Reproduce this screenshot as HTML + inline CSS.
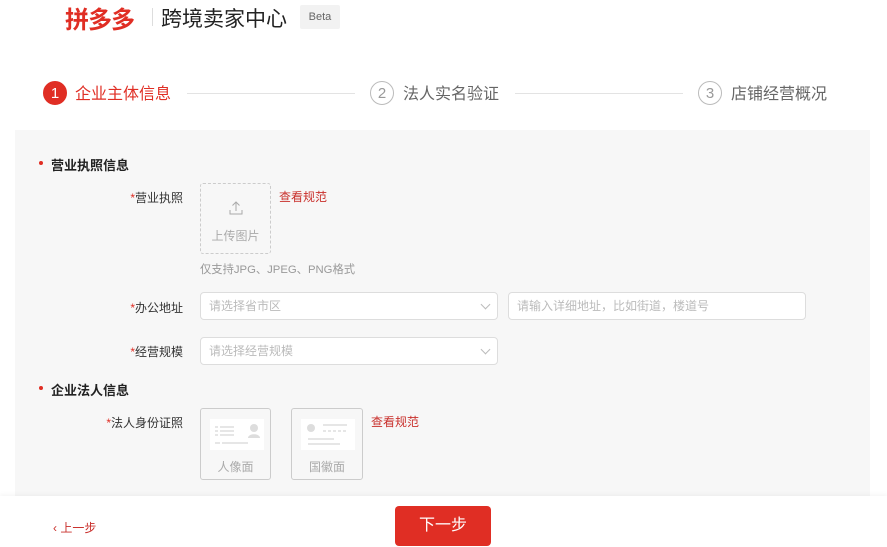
<!DOCTYPE html>
<html><head><meta charset="utf-8"><style>
*{margin:0;padding:0;box-sizing:border-box}
body{width:887px;height:547px;overflow:hidden;background:#fff;font-family:"Liberation Sans","Noto Sans CJK SC",sans-serif;position:relative;color:#333}
.a{position:absolute;white-space:nowrap}
.panel{position:absolute;left:15px;top:130px;width:855px;height:366px;background:#f7f7f7}
.circ{position:absolute;width:24px;height:24px;border-radius:50%;border:1px solid #bbb;color:#999;font-size:15px;display:flex;align-items:center;justify-content:center}
.line{position:absolute;height:1px;background:#e3e3e3;top:93px}
.stxt{font-size:16px;color:#666;top:84px;line-height:22px}
.sec{font-size:13px;font-weight:bold;color:#222}
.dot{width:4px;height:4px;border-radius:50%;background:#e02e24}
.lbl{font-size:12px;color:#333;text-align:right;width:160px}
.lbl b{color:#e02e24;font-weight:normal}
.red{color:#c9302c;font-size:12px}
.inp{position:absolute;height:28px;background:#fff;border:1px solid #ddd;border-radius:4px;font-size:12px;color:#bbb;padding-left:8px;line-height:26px}
.chev{position:absolute;right:8px;top:8px;width:7px;height:7px;border-right:1px solid #bbb;border-bottom:1px solid #bbb;transform:rotate(45deg)}
.box{position:absolute;border:1px solid #ccc;border-radius:3px;background:#f7f7f7;font-size:12px;color:#aaa;text-align:center}
</style></head><body>
<div class="a" style="left:65px;top:0px;font-size:24px;font-weight:bold;color:#e02e24;letter-spacing:-1px">拼多多</div>
<div class="a" style="left:152px;top:8px;width:1px;height:18px;background:#ddd"></div>
<div class="a" style="left:161px;top:3px;font-size:21px;color:#222">跨境卖家中心</div>
<div class="a" style="left:300px;top:5px;width:40px;height:24px;background:#f2f2f2;border-radius:2px;font-size:11px;color:#666;text-align:center;line-height:24px">Beta</div>

<div class="circ" style="left:43px;top:81px;background:#e02e24;border-color:#e02e24;color:#fff">1</div>
<div class="a stxt" style="left:75px;color:#e02e24">企业主体信息</div>
<div class="line" style="left:187px;width:168px"></div>
<div class="circ" style="left:370px;top:81px">2</div>
<div class="a stxt" style="left:403px">法人实名验证</div>
<div class="line" style="left:515px;width:168px"></div>
<div class="circ" style="left:698px;top:81px">3</div>
<div class="a stxt" style="left:731px">店铺经营概况</div>

<div class="panel"></div>
<div class="a dot" style="left:39px;top:161px"></div>
<div class="a sec" style="left:51px;top:155px">营业执照信息</div>
<div class="a lbl" style="left:23px;top:189px"><b>*</b>营业执照</div>
<div class="box" style="left:200px;top:183px;width:71px;height:71px;border:1px dashed #ccc">
<svg width="16" height="16" viewBox="0 0 16 16" style="position:absolute;left:27px;top:16px" fill="none" stroke="#aaa" stroke-width="1"><path d="M8 2v9M4.5 5.5L8 2l3.5 3.5M2 10v4h12v-4"/></svg>
<div style="position:absolute;left:0;right:0;top:43px">上传图片</div></div>
<div class="a red" style="left:279px;top:188px">查看规范</div>
<div class="a" style="left:200px;top:261px;font-size:11.3px;color:#999">仅支持JPG、JPEG、PNG格式</div>

<div class="a lbl" style="left:23px;top:299px"><b>*</b>办公地址</div>
<div class="inp" style="left:200px;top:292px;width:298px">请选择省市区<span class="chev"></span></div>
<div class="inp" style="left:508px;top:292px;width:298px">请输入详细地址，比如街道，楼道号</div>
<div class="a lbl" style="left:23px;top:343px"><b>*</b>经营规模</div>
<div class="inp" style="left:200px;top:337px;width:298px">请选择经营规模<span class="chev"></span></div>

<div class="a dot" style="left:39px;top:386px"></div>
<div class="a sec" style="left:51px;top:380px">企业法人信息</div>
<div class="a lbl" style="left:23px;top:414px"><b>*</b>法人身份证照</div>
<div class="box" style="left:200px;top:408px;width:71px;height:72px">
<svg width="54" height="31" style="position:absolute;left:9px;top:10px"><rect width="54" height="31" fill="#fff"/><g stroke="#ddd" stroke-width="1.5"><path d="M5 8h3M10 8h14M5 12h3M10 12h14M5 16h3M10 16h14M5 24h5M12 24h26"/></g><circle cx="44" cy="9" r="4" fill="#ddd"/><path d="M38 19c0-5 12-5 12 0z" fill="#ddd"/></svg>
<div style="position:absolute;left:0;right:0;top:49px">人像面</div></div>
<div class="box" style="left:291px;top:408px;width:72px;height:72px">
<svg width="54" height="31" style="position:absolute;left:9px;top:10px"><rect width="54" height="31" fill="#fff"/><circle cx="10" cy="9" r="4" fill="#ddd"/><g stroke="#ddd" stroke-width="1.5"><path d="M22 6h24M22 12h3M27 12h3M32 12h3M37 12h3M42 12h3M7 20h26M7 25h32"/></g></svg>
<div style="position:absolute;left:0;right:0;top:49px">国徽面</div></div>
<div class="a red" style="left:371px;top:413px">查看规范</div>

<div class="a" style="left:0;top:496px;width:887px;height:51px;background:#fff;box-shadow:0 -2px 4px rgba(0,0,0,0.04)"></div>
<div class="a" style="left:53px;top:519px;font-size:12px;color:#c9302c">‹ 上一步</div>
<div class="a" style="left:395px;top:506px;width:96px;height:40px;background:#e02e24;border-radius:4px;color:#fff;font-size:16px;text-align:center;line-height:40px">下一步</div>
</body></html>
